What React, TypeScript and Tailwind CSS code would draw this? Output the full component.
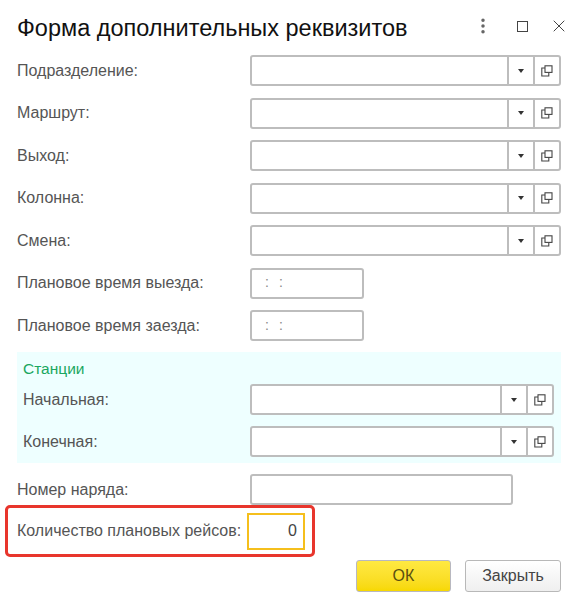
import { EllipsisVertical, X } from 'lucide-react';

function CopyIcon() {
  return (
    <svg width="12" height="12" viewBox="0 0 12 12" fill="none" stroke="#444" strokeWidth="1.1">
      <path d="M4 3H0.8V11H7.8V8" />
      <rect x="4" y="0.8" width="7" height="6.6" />
    </svg>
  );
}

function Picker({ width }: { width: string }) {
  return (
    <div className={`flex h-[31px] ${width} rounded-[3px] border-2 border-[#bdbdbd] bg-white`}>
      <div className="flex-1" />
      <div className="flex w-[26px] items-center justify-center border-l-2 border-[#bdbdbd]">
        <div className="h-0 w-0 border-x-[3.5px] border-t-[4px] border-x-transparent border-t-[#333]" />
      </div>
      <div className="flex w-[26px] items-center justify-center border-l-2 border-[#bdbdbd]">
        <CopyIcon />
      </div>
    </div>
  );
}

function Row({ label, children }: { label: string; children: React.ReactNode }) {
  return (
    <div className="flex h-[31px] items-center">
      <span className="w-[233px] text-[16px] text-[#555]">{label}</span>
      {children}
    </div>
  );
}

function TimeField() {
  return (
    <div className="flex h-[31px] w-[114px] items-center gap-[10px] rounded-[3px] border-2 border-[#bdbdbd] bg-white pb-[2px] pl-[13px] text-[14px] leading-none text-[#888]">
      <span>:</span>
      <span>:</span>
    </div>
  );
}

export default function App() {
  return (
    <div className="h-[609px] w-[587px] bg-white font-['Liberation_Sans',Arial,sans-serif]">
      <div className="flex h-[55px] items-start pl-[17px] pt-[13px]">
        <h1 className="flex-1 text-[23.5px] leading-[30px] text-[#111]">Форма дополнительных реквизитов</h1>
        <div className="mr-[18px] mt-[3px] flex items-center">
          <EllipsisVertical size={20} strokeWidth={2.2} className="text-[#666]" />
          <div className="ml-[24px] h-[11px] w-[11px] border-[1.5px] border-[#444]" />
          <X size={20} strokeWidth={1.2} className="ml-[21px] text-[#444]" />
        </div>
      </div>

      <div className="flex flex-col gap-[11.5px] pl-[17px]">
        <Row label="Подразделение:"><Picker width="w-[311px]" /></Row>
        <Row label="Маршрут:"><Picker width="w-[311px]" /></Row>
        <Row label="Выход:"><Picker width="w-[311px]" /></Row>
        <Row label="Колонна:"><Picker width="w-[311px]" /></Row>
        <Row label="Смена:"><Picker width="w-[311px]" /></Row>
        <Row label="Плановое время выезда:"><TimeField /></Row>
        <Row label="Плановое время заезда:"><TimeField /></Row>
      </div>

      <div className="mt-[11px] ml-[17px] h-[111px] w-[544px] bg-[#eeffff] pl-[6px] pt-[7px]">
        <div className="h-[25px] text-[15.5px] leading-[20px] text-[#1aa760]">Станции</div>
        <div className="flex flex-col gap-[11px]">
          <div className="flex h-[31px] items-center">
            <span className="w-[227px] text-[16px] text-[#555]">Начальная:</span>
            <Picker width="w-[304px]" />
          </div>
          <div className="flex h-[31px] items-center">
            <span className="w-[227px] text-[16px] text-[#555]">Конечная:</span>
            <Picker width="w-[304px]" />
          </div>
        </div>
      </div>

      <div className="mt-[11px] pl-[17px]">
        <Row label="Номер наряда:">
          <div className="h-[31px] w-[263px] rounded-[3px] border-2 border-[#bdbdbd] bg-white" />
        </Row>
      </div>

      <div className="relative ml-[5px] flex h-[52px] w-[310px] items-center rounded-[5px] border-[3px] border-[#e8352c] pl-[9px]">
        <span className="w-[230px] shrink-0 text-[16px] whitespace-nowrap text-[#555]">Количество плановых рейсов:</span>
        <div className="flex h-[37px] w-[58px] items-center justify-end border-2 border-[#f5bf1c] pr-[6px] text-[16px] text-[#444]">
          0
        </div>
      </div>

      <div className="mt-[3px] flex justify-end gap-[14px] pr-[26px]">
        <button className="h-[32px] w-[95px] rounded-[3px] border border-[#b8b8c0] bg-gradient-to-b from-[#ffe941] to-[#f7d800] text-[16px] text-[#5a4f10]">
          ОК
        </button>
        <button className="h-[32px] w-[96px] rounded-[3px] border border-[#b8b8b8] bg-gradient-to-b from-white to-[#efefef] text-[16px] text-[#444]">
          Закрыть
        </button>
      </div>
    </div>
  );
}
